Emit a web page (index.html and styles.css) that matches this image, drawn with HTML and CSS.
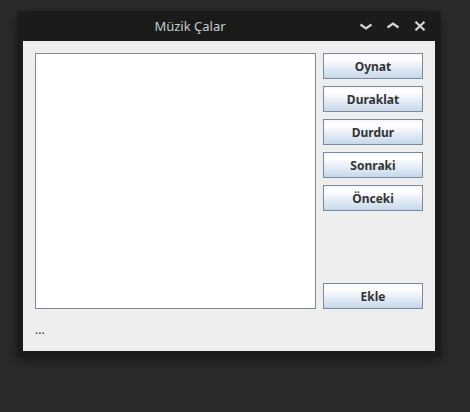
FILE: index.html
```html
<!DOCTYPE html>
<html lang="tr">
<head>
<meta charset="utf-8">
<title>Müzik Çalar</title>
<link rel="stylesheet" href="styles.css">
</head>
<body>
<div class="window">
  <div class="titlebar">
    <div class="title">Müzik Çalar</div>
    <div class="controls">
      <span class="ctl"><svg width="24" height="12" viewBox="0 0 24 12"><path d="M6.5 4.5 L12 8.5 L17.5 4.5" fill="none" stroke="#d6d6d6" stroke-width="2.2"/></svg></span>
      <span class="ctl"><svg width="24" height="12" viewBox="0 0 24 12"><path d="M6.5 7.5 L12 3.5 L17.5 7.5" fill="none" stroke="#d6d6d6" stroke-width="2.2"/></svg></span>
      <span class="ctl"><svg width="24" height="12" viewBox="0 0 24 12"><path d="M7.5 1.8 L16.5 10.2 M16.5 1.8 L7.5 10.2" fill="none" stroke="#d6d6d6" stroke-width="2.2"/></svg></span>
    </div>
  </div>
  <div class="content">
    <div class="main">
      <div class="list"></div>
      <div class="buttons">
        <button class="btn">Oynat</button>
        <button class="btn">Duraklat</button>
        <button class="btn">Durdur</button>
        <button class="btn">Sonraki</button>
        <button class="btn">Önceki</button>
        <button class="btn btn-bottom">Ekle</button>
      </div>
    </div>
    <div class="status">...</div>
  </div>
</div>
</body>
</html>
```

FILE: styles.css
```css
html, body {
  margin: 0;
  padding: 0;
  background: #2b2b2b;
  width: 470px;
  height: 412px;
  overflow: hidden;
}
body {
  padding: 11px 0 0 17px;
  box-sizing: border-box;
}
.window {
  width: 424px;
  height: 346px;
  background: #1b1c1a;
  border-radius: 4px 4px 0 0;
  box-shadow: 0 4px 14px rgba(0,0,0,0.45);
  display: flex;
  flex-direction: column;
}
.titlebar {
  height: 30px;
  display: flex;
  align-items: center;
}
.title {
  flex: 1;
  text-align: center;
  padding-left: 9px;
  font-family: "Noto Sans", sans-serif;
  font-size: 13px;
  color: #c4ccd4;
  padding-bottom: 1px;
}
.controls {
  display: flex;
  gap: 3px;
  padding-right: 9px;
}
.ctl {
  width: 24px;
  height: 12px;
  display: flex;
}
.content {
  margin: 0 6px 6px 6px;
  flex: 1;
  background: #eeeeee;
  padding: 12px 12px 0 12px;
  display: flex;
  flex-direction: column;
}
.main {
  display: flex;
  gap: 7px;
  height: 256px;
}
.list {
  flex: 1;
  background: #ffffff;
  border: 1px solid #7a8a99;
}
.buttons {
  width: 100px;
  display: flex;
  flex-direction: column;
  gap: 7px;
}
.btn {
  height: 26px;
  margin: 0;
  padding: 0;
  border: 1px solid #7a8a99;
  background: linear-gradient(to bottom, #f4f8fc 0%, #ffffff 20%, #e6eef7 55%, #c6d8ea 100%);
  font-family: "Noto Sans", sans-serif;
  font-weight: bold;
  font-size: 12px;
  color: #333333;
}
.btn-bottom {
  margin-top: auto;
}
.status {
  margin-top: 13px;
  line-height: 16px;
  font-family: "Noto Sans", sans-serif;
  font-size: 12px;
  color: #333333;
}
```
